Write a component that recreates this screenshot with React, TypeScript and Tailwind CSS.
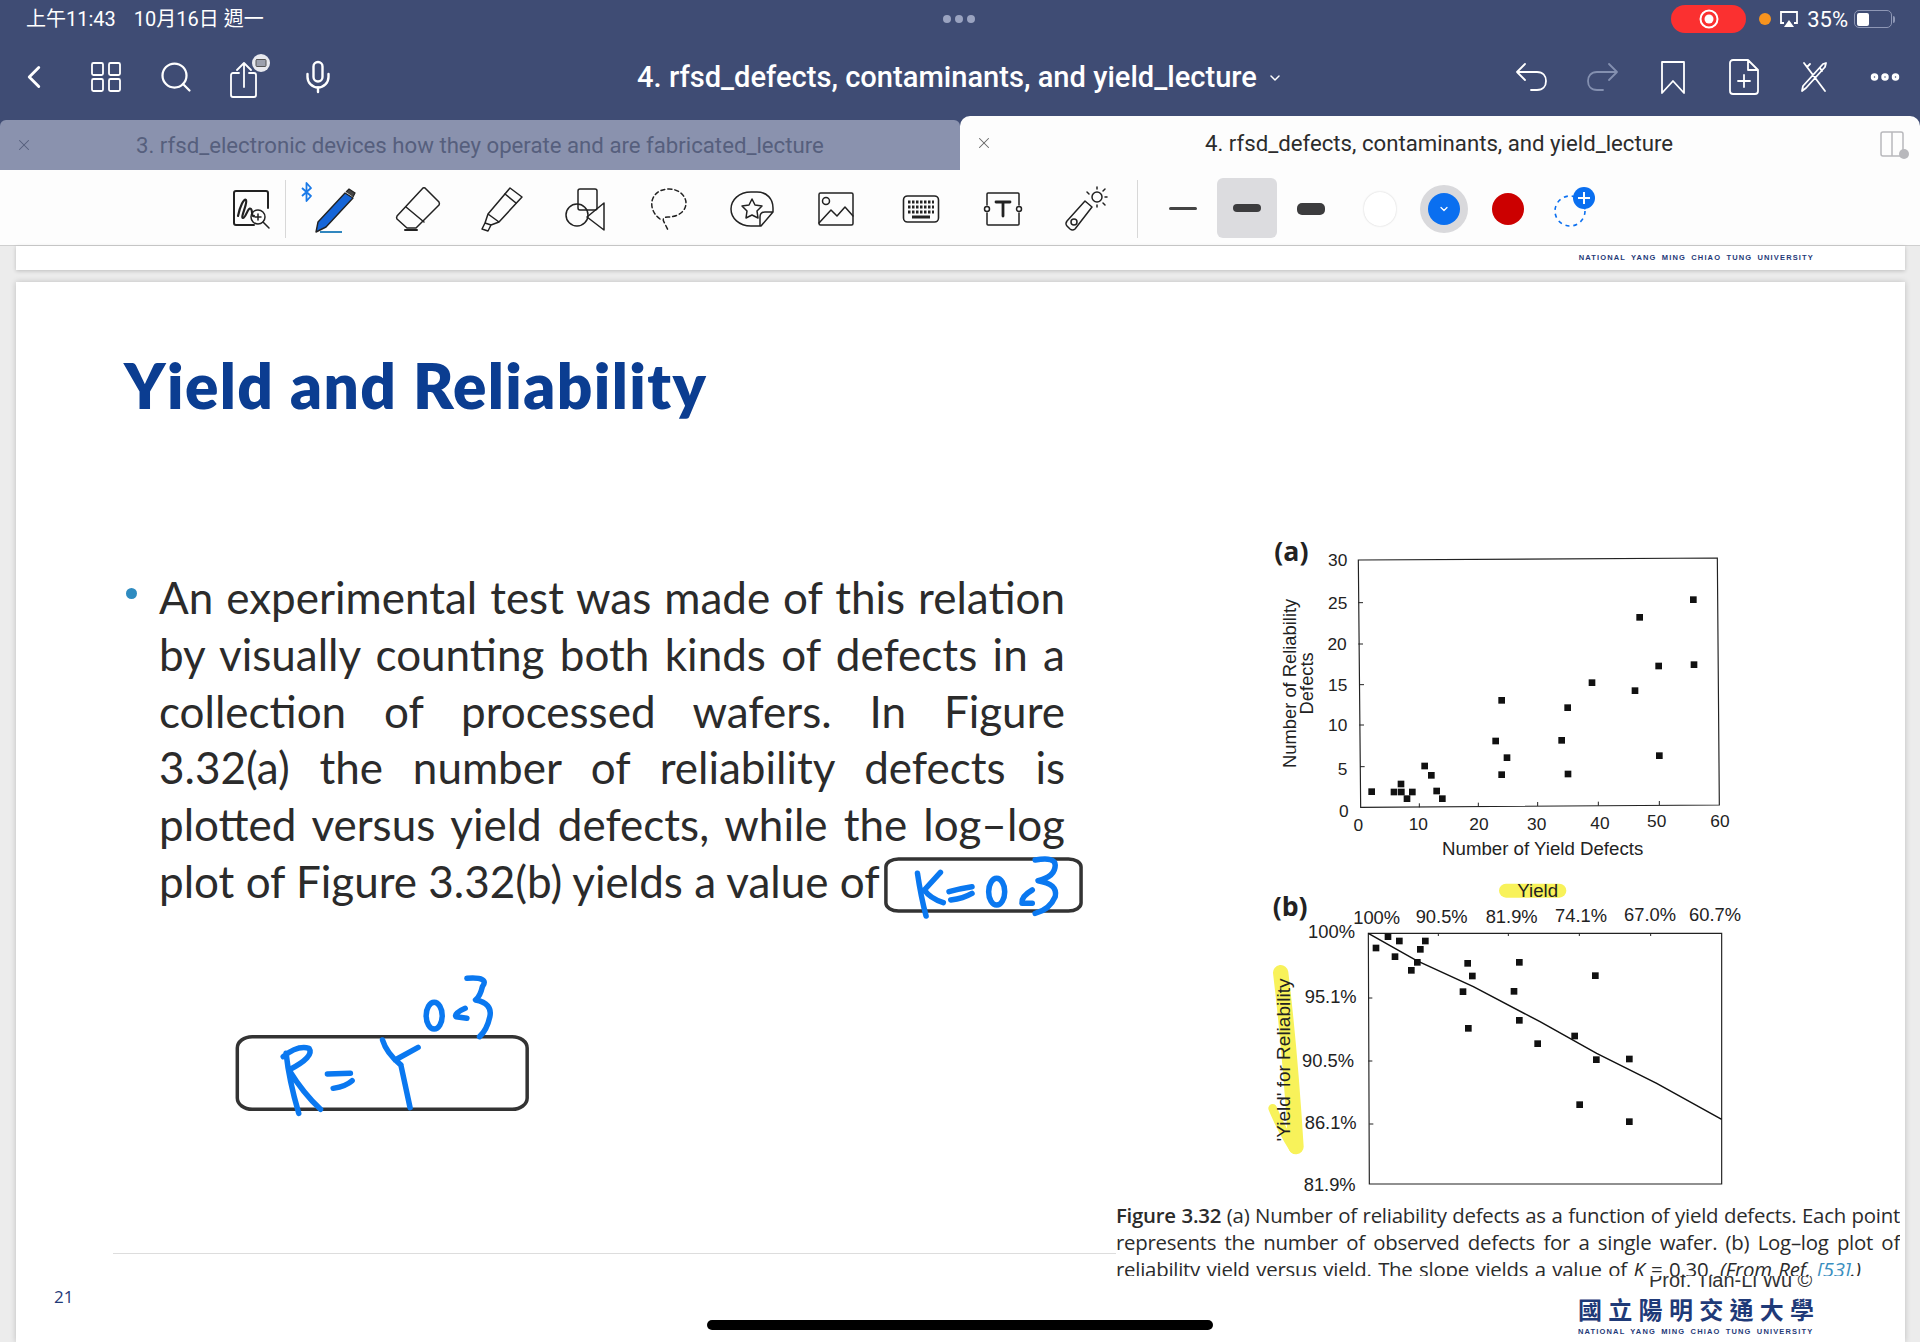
import React from 'react';
import { ChevronDown, ChevronLeft, Mic, MoreHorizontal, Search, X } from 'lucide-react';

const BODY_LINES = [
  'An experimental test was made of this relation',
  'by visually counting both kinds of defects in a',
  'collection of processed wafers. In Figure',
  '3.32(a) the number of reliability defects is',
  'plotted versus yield defects, while the log–log',
];

const POINTS_A = [
  [395, 815], [462, 816], [483, 792], [484, 816], [501, 836], [517, 816], [554, 738], [574, 766],
  [590, 813], [607, 836], [767, 663], [785, 541], [801, 713], [785, 764], [965, 661], [983, 563],
  [984, 762], [1056, 488], [1185, 512], [1199, 292], [1256, 438], [1258, 707], [1360, 239], [1362, 434],
];

const POINTS_B = [
  [408, 234], [444, 200], [478, 213], [556, 213], [541, 238], [465, 260], [532, 277], [514, 301],
  [683, 280], [697, 318], [669, 365], [685, 475], [838, 277], [822, 364], [838, 451], [893, 521],
  [1004, 498], [1066, 317], [1069, 569], [1168, 567], [1019, 704], [1168, 755],
];

const TICKS_A_Y: [string, number, number][] = [
  ['30', 322, 138], ['25', 322, 267], ['20', 320, 390], ['15', 322, 512], ['10', 322, 634], ['5', 322, 764], ['0', 326, 892],
];
const TICKS_A_X: [string, number, number][] = [
  ['0', 355, 934], ['10', 535, 930], ['20', 717, 930], ['30', 890, 930], ['40', 1080, 926], ['50', 1250, 922], ['60', 1440, 920],
];
const TICKS_B_Y: [string, number, number][] = [
  ['100%', 345, 205], ['95.1%', 350, 400], ['90.5%', 342, 590], ['86.1%', 350, 777], ['81.9%', 347, 962],
];
const TICKS_B_X: [string, number, number][] = [
  ['100%', 410, 162], ['90.5%', 605, 160], ['81.9%', 815, 158], ['74.1%', 1023, 156], ['67.0%', 1230, 154], ['60.7%', 1425, 152],
];

const line = { fill: 'none', stroke: 'currentColor', strokeWidth: 1.8, strokeLinecap: 'round', strokeLinejoin: 'round' } as const;
const thin = { fill: 'none', stroke: '#222', strokeWidth: 1.5, strokeLinecap: 'round', strokeLinejoin: 'round' } as const;

const NavBox = ({ children }: { children: React.ReactNode }) => (
  <div className="w-[70.6px] h-[44px] flex items-center justify-center shrink-0">{children}</div>
);

const ToolBox = ({ children }: { children: React.ReactNode }) => (
  <div className="w-[83.5px] h-[62px] flex items-center justify-center shrink-0">{children}</div>
);

const SwatchBox = ({ children }: { children: React.ReactNode }) => (
  <div className="w-[64px] h-[60px] flex items-center justify-center shrink-0">{children}</div>
);

const UniversityLine = () => (
  <div className="font-['Liberation_Sans',sans-serif] font-bold text-[7.5px] leading-[10px] tracking-[1.15px] [word-spacing:2px] text-[#1f3a78] whitespace-nowrap">
    NATIONAL YANG MING CHIAO TUNG UNIVERSITY
  </div>
);

function StatusBar() {
  return (
    <div className="h-[38px] flex items-center justify-between text-white relative">
      <div className="pl-[26px] flex gap-[18px] text-[20px] font-['Roboto','Noto_Sans_CJK_TC',sans-serif]">
        <span>上午11:43</span>
        <span>10月16日 週一</span>
      </div>
      <div className="absolute left-[943px] top-[15px] flex gap-[4px]">
        <span className="w-[8px] h-[8px] rounded-full bg-[#9aa3c0]" />
        <span className="w-[8px] h-[8px] rounded-full bg-[#9aa3c0]" />
        <span className="w-[8px] h-[8px] rounded-full bg-[#9aa3c0]" />
      </div>
      <div className="flex items-center pr-[25px]">
        <div className="w-[75px] h-[28px] rounded-full bg-[#fb3030] flex items-center justify-center">
          <svg width="20" height="20" viewBox="0 0 20 20">
            <circle cx="10" cy="10" r="8.5" fill="none" stroke="#fff" strokeWidth="2" />
            <circle cx="10" cy="10" r="4.5" fill="#fff" />
          </svg>
        </div>
        <span className="ml-[13px] w-[12px] h-[12px] rounded-full bg-[#f7931e]" />
        <svg className="ml-[8px]" width="20" height="18" viewBox="0 0 20 18">
          <path d="M5 13H2V2h16v11h-3" fill="none" stroke="#fff" strokeWidth="1.8" />
          <path d="M10 10l5 7H5z" fill="#fff" />
        </svg>
        <span className="ml-[8px] text-[22px] font-['Roboto',sans-serif]">35%</span>
        <div className="ml-[6px] w-[38px] h-[18px] rounded-[5px] border-[1.5px] border-[#8e97b5] p-[1.5px]">
          <div className="w-[12px] h-full rounded-[2px] bg-white" />
        </div>
        <span className="ml-[1px] w-[2px] h-[7px] rounded-r bg-[#8e97b5]" />
      </div>
    </div>
  );
}

function NavBar() {
  return (
    <div className="h-[78px] flex items-center justify-between text-white relative">
      <div className="w-[424px] flex items-center">
        <div className="w-[68px] pl-[15px]">
          <ChevronLeft size={38} strokeWidth={1.8} />
        </div>
        <div className="w-[70px] flex justify-center ml-[3px]">
          <svg width="32" height="32" viewBox="0 0 32 32" {...line}>
            <rect x="2" y="2" width="11" height="12" rx="1.5" />
            <rect x="19" y="2" width="11" height="12" rx="1.5" />
            <rect x="2" y="18" width="11" height="12" rx="1.5" />
            <rect x="19" y="18" width="11" height="12" rx="1.5" />
          </svg>
        </div>
        <div className="w-[70px] flex justify-center">
          <Search size={36} strokeWidth={1.5} />
        </div>
        <div className="w-[70px] flex justify-center pl-[8px]">
          <svg width="44" height="46" viewBox="0 0 44 46" {...line}>
            <path d="M11 19H5a2 2 0 0 0-2 2v20a2 2 0 0 0 2 2h21a2 2 0 0 0 2-2V21a2 2 0 0 0-2-2h-5M16 33V9M9 16l7-7 7 7" />
            <circle cx="33" cy="9" r="9" fill="#e8e9ef" stroke="none" />
            <rect x="28" y="5.5" width="10" height="7" rx="1" fill="#9ca0ad" stroke="#555" strokeWidth="1" />
          </svg>
        </div>
        <div className="w-[70px] flex justify-center ml-[2px]">
          <Mic size={36} strokeWidth={1.6} />
        </div>
      </div>
      <div className="pt-[2px] flex items-center gap-[10px] text-[29.1px] font-medium font-['Roboto',sans-serif] whitespace-nowrap">
        <span>4. rfsd_defects, contaminants, and yield_lecture</span>
        <ChevronDown size={16} strokeWidth={2.2} />
      </div>
      <div className="w-[424px] flex justify-end">
        <NavBox>
          <svg width="34" height="32" viewBox="0 0 34 32" {...line}>
            <path d="M10 3L2 11l8 8M2 11h20c6 0 9 4 9 9s-3 9-9 9h-6" />
          </svg>
        </NavBox>
        <NavBox>
          <svg className="text-[#8490b0]" width="34" height="32" viewBox="0 0 34 32" {...line}>
            <path d="M24 3l8 8-8 8M32 11H12c-6 0-9 4-9 9s3 9 9 9h6" />
          </svg>
        </NavBox>
        <NavBox>
          <svg width="28" height="36" viewBox="0 0 28 36" {...line}>
            <path d="M3 3h22v31l-11-12-11 12z" />
          </svg>
        </NavBox>
        <NavBox>
          <svg width="32" height="38" viewBox="0 0 32 38" {...line}>
            <path d="M20 2H5a3 3 0 0 0-3 3v28a3 3 0 0 0 3 3h22a3 3 0 0 0 3-3V12zM20 2v10h10M16 17v12M10 23h12" />
          </svg>
        </NavBox>
        <NavBox>
          <svg width="30" height="34" viewBox="0 0 30 34" {...line}>
            <path d="M5 3l21 28M8 7l3-3M24 4l3-1-1 4L7 28l-4 3 1-5zM21 8l2 3" />
          </svg>
        </NavBox>
        <NavBox>
          <MoreHorizontal size={36} strokeWidth={3} />
        </NavBox>
      </div>
    </div>
  );
}

function TabRow() {
  return (
    <div className="h-[54px] flex font-['Roboto',sans-serif] text-[22.2px]">
      <div className="w-[960px] mt-[4px] bg-[#8a92ae] rounded-t-[6px] flex items-center relative text-[#565f7d]">
        <X className="ml-[15px]" size={18} strokeWidth={1.4} />
        <span className="ml-[103px] pt-[1px]">3. rfsd_electronic devices how they operate and are fabricated_lecture</span>
      </div>
      <div className="w-[960px] bg-[#fdfdfd] rounded-t-[10px] flex items-center relative text-[#2c2c2c]">
        <X className="ml-[15px] text-[#666]" size={18} strokeWidth={1.4} />
        <span className="ml-[212px] pt-[2px]">4. rfsd_defects, contaminants, and yield_lecture</span>
        <svg className="absolute left-[917px] top-[14px]" width="32" height="30" viewBox="0 0 32 30">
          <path d="M6 2h18a2 2 0 0 1 2 2v20a2 2 0 0 1-2 2H6a2 2 0 0 1-2-2V4a2 2 0 0 1 2-2zM15 2v24" fill="none" stroke="#b8b8bc" strokeWidth="1.5" />
          <circle cx="27" cy="24" r="5" fill="#b8b8bc" />
        </svg>
      </div>
    </div>
  );
}

function Toolbar() {
  return (
    <div className="h-[76px] bg-[#fdfdfd] border-b border-[#cfcfcf] flex items-center pl-[217px] pt-[2px]">
      <div className="w-[68px] flex justify-center">
        <svg width="42" height="42" viewBox="0 0 42 42" {...thin}>
          <path d="M38 20V5a2 2 0 0 0-2-2H6a2 2 0 0 0-2 2v30a2 2 0 0 0 2 2h18" strokeWidth="2" />
          <path d="M8 28c2-10 6-18 8-16 2 3-6 18-3 18s5-12 8-9c2 2 0 8 3 7" strokeWidth="2.2" />
          <circle cx="28" cy="29" r="7" />
          <path d="M28 26v6M25 29h6M33 34l6 6" />
        </svg>
      </div>
      <div className="w-px h-[58px] bg-[#d8d8d8]" />
      <div className="ml-[7px] flex items-center">
        <ToolBox>
          <svg width="70" height="56" viewBox="0 0 70 56">
            <path d="M2 7l9 8-4.5 5V2L11 7l-9 8" fill="none" stroke="#1a7ae8" strokeWidth="1.8" strokeLinejoin="round" />
            <path d="M45 12l8 5-27 29-10 5 2-10z" fill="#1565d8" stroke="#222" strokeWidth="1.4" strokeLinejoin="round" />
            <path d="M46 11l3-3 6 4-2 4" fill="#444" stroke="#222" strokeWidth="1.2" />
            <path d="M20 51h22" stroke="#1a7ab8" strokeWidth="1.8" />
          </svg>
        </ToolBox>
        <ToolBox>
          <svg width="46" height="46" viewBox="0 0 46 46" {...thin}>
            <path d="M30 2l14 14a3 3 0 0 1 0 3L21 42H12L2 33a3 3 0 0 1 0-3L28 2a2 2 0 0 1 2 0z" />
            <path d="M11 21l18 15" />
            <path d="M10 44h12" strokeWidth="2" />
          </svg>
        </ToolBox>
        <ToolBox>
          <svg width="44" height="46" viewBox="0 0 44 46" {...thin}>
            <path d="M30 2l12 9-23 25-11-8zM8 28l-3 9 6 2 8-3M5 37l-3 6 6 2 3-6" />
            <path d="M25 8l11 9" />
          </svg>
        </ToolBox>
        <ToolBox>
          <svg width="42" height="44" viewBox="0 0 42 44" {...thin}>
            <rect x="14" y="2" width="19" height="21" rx="2" />
            <circle cx="13" cy="28" r="11" />
            <path d="M40 16v27L23 30z" />
          </svg>
        </ToolBox>
        <ToolBox>
          <svg width="38" height="44" viewBox="0 0 38 44" {...thin}>
            <path d="M10 32C3 27 1 20 2 14 4 6 11 2 19 2c10 0 17 7 17 14 0 9-9 14-18 14-4 0-6 2-4 5l4 8" strokeDasharray="4 3" />
          </svg>
        </ToolBox>
        <ToolBox>
          <svg width="46" height="38" viewBox="0 0 46 38" {...thin}>
            <path d="M22 2h6c10 0 16 7 16 16v4L32 36H22C10 36 2 28 2 19S10 2 22 2zM44 22H36c-3 0-5 2-5 5v9" />
            <path d="M23 9l3 6 7 1-5 5 1 7-6-3-6 3 1-7-5-5 7-1z" />
          </svg>
        </ToolBox>
        <ToolBox>
          <svg width="38" height="36" viewBox="0 0 38 36" {...thin}>
            <rect x="2" y="2" width="34" height="32" rx="1.5" />
            <circle cx="9" cy="10" r="3.5" />
            <path d="M2 32l12-13 6 6 8-9 8 9" />
          </svg>
        </ToolBox>
        <ToolBox>
          <svg className="ml-[3px]" width="38" height="32" viewBox="0 0 38 32">
            <rect x="1.5" y="3" width="35" height="26" rx="4" fill="none" stroke="#222" strokeWidth="1.6" />
            <path d="M6 9h26M6 14h26M6 19h26" stroke="#222" strokeWidth="3" strokeDasharray="2.5 1.5" />
            <path d="M10 24h18" stroke="#222" strokeWidth="3" />
          </svg>
        </ToolBox>
        <ToolBox>
          <svg width="42" height="36" viewBox="0 0 42 36" {...thin}>
            <path d="M5 14V3a1 1 0 0 1 1-1h30a1 1 0 0 1 1 1v11M5 22v11a1 1 0 0 0 1 1h30a1 1 0 0 0 1-1V22" />
            <circle cx="5" cy="18" r="2.5" />
            <circle cx="37" cy="18" r="2.5" />
            <path d="M14 11h14M21 11v14" strokeWidth="2.8" />
          </svg>
        </ToolBox>
        <ToolBox>
          <svg width="46" height="46" viewBox="0 0 46 46" {...thin}>
            <path d="M22 15l7 6-17 22a4 4 0 0 1-5 0l-3-3a4 4 0 0 1 0-5z" />
            <circle cx="11" cy="36" r="3" />
            <circle cx="34" cy="11" r="5" />
            <path d="M34 1v2M34 19v2M44 11h-2M24 6l2 2M42 3l-2 2M42 19l-2-2" />
          </svg>
        </ToolBox>
      </div>
      <div className="ml-[9px] w-px h-[58px] bg-[#d8d8d8]" />
      <div className="ml-[13px] flex items-center">
        <SwatchBox>
          <span className="w-[28px] h-[3px] rounded-full bg-[#444]" />
        </SwatchBox>
        <SwatchBox>
          <div className="-mt-[2px] w-[60px] h-[60px] rounded-[6px] bg-[#dcdcdf] flex items-center justify-center">
            <span className="w-[28px] h-[8px] rounded-full bg-[#3c3c3e]" />
          </div>
        </SwatchBox>
        <SwatchBox>
          <span className="w-[28px] h-[12px] rounded-[5px] bg-[#3c3c3e]" />
        </SwatchBox>
        <div className="ml-[5px] flex items-center">
          <SwatchBox>
            <span className="w-[32px] h-[34px] rounded-full bg-white shadow-[0_0_2px_rgba(0,0,0,0.2)]" />
          </SwatchBox>
          <SwatchBox>
            <div className="w-[48px] h-[48px] rounded-full bg-[#d9d9dc] flex items-center justify-center">
              <div className="w-[32px] h-[32px] rounded-full bg-[#0a6ff0] flex items-center justify-center text-white">
                <ChevronDown size={12} strokeWidth={2.5} />
              </div>
            </div>
          </SwatchBox>
          <SwatchBox>
            <span className="w-[32px] h-[32px] rounded-full bg-[#cc0000]" />
          </SwatchBox>
          <SwatchBox>
            <svg className="ml-[2px]" width="46" height="46" viewBox="0 0 46 46">
              <circle cx="20" cy="25" r="15" fill="none" stroke="#0a6ff0" strokeWidth="1.6" strokeDasharray="4 4" />
              <circle cx="34" cy="12" r="11" fill="#0a6ff0" />
              <path d="M34 6v12M28 12h12" stroke="#fff" strokeWidth="2" />
            </svg>
          </SwatchBox>
        </div>
      </div>
    </div>
  );
}

function ChartA() {
  return (
    <svg className="block" width="520" height="350" viewBox="0 0 1560 1050" fontFamily="'Liberation Sans', sans-serif" fill="#222">
      <text x="103" y="122" fontFamily="'Open Sans', sans-serif" fontWeight="700" fontSize="80">(a)</text>
      <path d="M355 120L1432 114 1438 855 362 862z" fill="none" stroke="#222" strokeWidth="3.5" />
      <path d="M355 248h14M355 372h14M358 494h14M358 615h14M360 740h14M538 862v-12M715 860v-12M893 858v-12M1075 857v-12M1258 855v-12" stroke="#222" strokeWidth="3" />
      {TICKS_A_Y.map(([t, x, y]) => (
        <text key={t} x={x} y={y} fontSize="52" textAnchor="end">{t}</text>
      ))}
      {TICKS_A_X.map(([t, x, y]) => (
        <text key={t} x={x} y={y} fontSize="52" textAnchor="middle">{t}</text>
      ))}
      <text x="908" y="1004" fontSize="56" textAnchor="middle">Number of Yield Defects</text>
      <text transform="translate(168 490) rotate(-90)" fontSize="55" textAnchor="middle">Number of Reliability</text>
      <text transform="translate(218 490) rotate(-90)" fontSize="55" textAnchor="middle">Defects</text>
      {POINTS_A.map(([x, y]) => (
        <rect key={`${x}-${y}`} x={x - 10} y={y - 10} width="20" height="20" fill="#111" />
      ))}
    </svg>
  );
}

function ChartB() {
  return (
    <svg className="block" width="520" height="333" viewBox="0 0 1560 999" fontFamily="'Liberation Sans', sans-serif" fill="#222">
      <path d="M798 62H958" fill="none" stroke="#f8f25a" strokeWidth="42" strokeLinecap="round" />
      <path d="M122 308Q150 540 168 830" fill="none" stroke="#f8f25a" strokeWidth="46" strokeLinecap="round" />
      <path d="M98 715Q125 780 160 835" fill="none" stroke="#f8f25a" strokeWidth="26" strokeLinecap="round" />
      <text x="893" y="82" fontSize="56" textAnchor="middle">Yield</text>
      <text x="98" y="137" fontFamily="'Open Sans', sans-serif" fontWeight="700" fontSize="80">(b)</text>
      <path d="M385 190H1445V942H388z" fill="none" stroke="#222" strokeWidth="3.5" />
      <path d="M385 384h12M385 573h12M388 762h12M595 190v8M805 190v8M1018 190v8M1232 190v8" stroke="#222" strokeWidth="3" />
      <path d="M385 190L530 272 700 350 900 455 1070 550 1250 640 1445 748" fill="none" stroke="#111" strokeWidth="4.5" />
      {TICKS_B_Y.map(([t, x, y]) => (
        <text key={t} x={x} y={y} fontSize="55" textAnchor="end">{t}</text>
      ))}
      {TICKS_B_X.map(([t, x, y]) => (
        <text key={t} x={x} y={y} fontSize="55" textAnchor="middle">{t}</text>
      ))}
      <text transform="translate(150 570) rotate(-90)" fontSize="57" textAnchor="middle">'Yield' for Reliability</text>
      {POINTS_B.map(([x, y]) => (
        <rect key={`${x}-${y}`} x={x - 10} y={y - 10} width="20" height="20" fill="#111" />
      ))}
    </svg>
  );
}

// handwriting laid over the slide, coordinates follow the 900x300 crop stretched to 1568x900
function InkLayer() {
  const ink = { fill: 'none', stroke: '#0a78f0', strokeWidth: 5.5, strokeLinecap: 'round', strokeLinejoin: 'round', vectorEffect: 'non-scaling-stroke' } as const;
  const box = { fill: 'none', stroke: '#333', strokeWidth: 3.5, vectorEffect: 'non-scaling-stroke' } as const;
  return (
    <svg className="absolute left-[184px] top-[558px] pointer-events-none" width="900" height="300" viewBox="0 0 1568 900" preserveAspectRatio="none">
      <rect x="1195" y="57" width="340" height="156" rx="22" ry="24" {...box} />
      <rect x="65" y="590" width="505" height="218" rx="26" ry="34" {...box} />
      <path d="M1250 100Q1256 170 1265 228M1290 97L1262 150Q1272 175 1295 188" {...ink} />
      <path d="M1305 155Q1325 145 1345 140M1308 180Q1330 175 1345 160" {...ink} />
      <ellipse cx="1388" cy="155" rx="14" ry="40" {...ink} />
      <path d="M1450 150Q1430 170 1432 190L1450 190" {...ink} />
      <path d="M1455 60Q1490 50 1490 75Q1490 110 1460 122Q1495 132 1490 170Q1480 210 1455 220" {...ink} />
      <path d="M150 640Q155 720 172 820M145 650Q170 615 190 625Q200 650 155 690Q180 760 210 808" {...ink} />
      <path d="M222 702L262 700M232 745Q255 738 265 722" {...ink} />
      <path d="M318 600Q325 640 350 675M380 622L340 660M350 675L366 803" {...ink} />
      <ellipse cx="408" cy="527" rx="14" ry="40" {...ink} />
      <path d="M462 505Q442 520 446 530L465 535" {...ink} />
      <path d="M465 415Q505 410 492 440Q488 470 480 480Q510 490 505 530Q500 570 487 590" {...ink} />
    </svg>
  );
}

function Slide() {
  return (
    <div className="relative mt-[12px] mx-[16px] mr-[15px] h-[1060px] bg-white shadow-[0_0_6px_rgba(0,0,0,0.2)] flex overflow-hidden">
      <div className="w-[1100px] shrink-0 flex flex-col">
        <h1 className="mt-[64px] ml-[108px] h-[78px] text-[62px] leading-[78px] tracking-[1.4px] font-extrabold text-[#0b3d91] font-['Lato',sans-serif] whitespace-nowrap">
          Yield and Reliability
        </h1>
        <div className="mt-[145px] ml-[110px] flex font-['Lato',sans-serif] text-[44px] leading-[56.8px] text-[#2b2b2b]">
          <span className="w-[11px] h-[11px] mt-[19px] rounded-full bg-[#2e8bc0] shrink-0" />
          <div className="ml-[22px] w-[906px]">
            {BODY_LINES.map((t) => (
              <div key={t} className="text-justify [text-align-last:justify] whitespace-nowrap">{t}</div>
            ))}
            <div className="whitespace-nowrap">plot of Figure 3.32(b) yields a value of</div>
          </div>
        </div>
        <div className="mt-[343px] ml-[97px] h-px bg-[#dddddd]" />
        <div className="mt-[33px] ml-[38px] text-[17px] font-medium leading-[20px] text-[#1f3a78] font-['Open_Sans',sans-serif]">21</div>
      </div>
      <div className="flex-1 min-w-0 flex flex-col">
        <div className="mt-[238px] ml-[124px]">
          <ChartA />
          <ChartB />
        </div>
        <div className="relative z-10 -mt-[1px] h-[74px] overflow-hidden bg-white font-['Open_Sans',sans-serif] text-[20.4px] leading-[27px] text-[#2b2b2b] w-[784px]">
          <div className="text-justify [text-align-last:justify] whitespace-nowrap tracking-[-0.25px]">
            <span className="font-semibold">Figure 3.32</span> (a) Number of reliability defects as a function of yield defects. Each point
          </div>
          <div className="text-justify [text-align-last:justify] whitespace-nowrap tracking-[-0.25px]">
            represents the number of observed defects for a single wafer. (b) Log–log plot of
          </div>
          <div className="whitespace-nowrap tracking-[-0.25px] [word-spacing:1.5px]">
            reliability yield versus yield. The slope yields a value of <i>K</i> = 0.30. <i>(From Ref. <span className="text-[#3b8fc0]">[53]</span>.)</i>
          </div>
        </div>
        <div className="-mt-[8px] ml-[533px] text-[20px] leading-[24px] text-[#333] font-['Liberation_Sans',sans-serif] whitespace-nowrap">
          Prof. Tian-Li Wu ©
        </div>
        <div className="mt-[2px] ml-[462px] text-[24px] leading-[30px] tracking-[6.3px] font-bold text-[#1f3a78] font-['Noto_Sans_CJK_TC',sans-serif] whitespace-nowrap">
          國立陽明交通大學
        </div>
        <div className="ml-[462px] mt-[3px]">
          <UniversityLine />
        </div>
      </div>
      <InkLayer />
    </div>
  );
}

export default function App() {
  return (
    <div className="relative w-[1920px] h-[1342px] bg-[#ececec] overflow-hidden">
      <div className="bg-[#3f4c74]">
        <StatusBar />
        <NavBar />
        <TabRow />
      </div>
      <Toolbar />
      <div className="mx-[16px] mr-[15px] h-[24px] bg-white shadow-[0_1px_4px_rgba(0,0,0,0.2)] flex items-center justify-end pr-[91px]">
        <UniversityLine />
      </div>
      <Slide />
      {/* home indicator */}
      <div className="absolute left-[707px] top-[1320px] w-[506px] h-[10px] rounded-full bg-black" />
    </div>
  );
}
